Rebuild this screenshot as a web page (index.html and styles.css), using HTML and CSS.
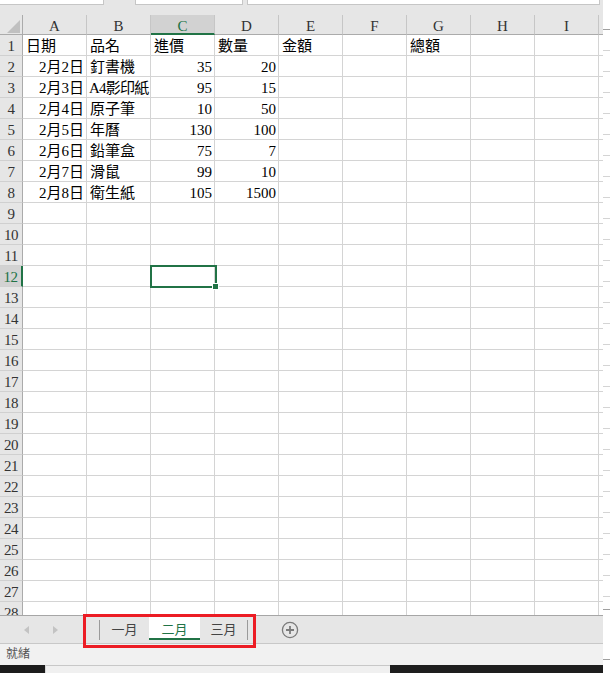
FILE: index.html
```html
<!DOCTYPE html>
<html>
<head>
  <meta charset="utf-8">
  <title>二月 - 進貨表</title>
  <link rel="stylesheet" href="styles.css">
</head>
<body>
  <div class="app">
    <div class="window">
      <div class="formula-strip">
        <div class="box name-box"></div>
        <div class="box fx-box"></div>
        <div class="box formula-box"></div>
      </div>

      <div class="sheet" id="sheet"></div>

      <div class="tabbar">
        <div class="nav">
          <span class="arrow left"></span>
          <span class="arrow right"></span>
        </div>
        <div class="tabs">
          <span class="sep"></span>
          <div class="tab">一月</div>
          <div class="tab active">二月</div>
          <div class="tab">三月</div>
          <span class="sep"></span>
        </div>
        <svg class="add-sheet" width="18" height="18" viewBox="0 0 18 18">
          <circle cx="9" cy="9" r="7.6" fill="none" stroke="#7b7b7b" stroke-width="1.3"/>
          <path d="M9 5v8M5 9h8" stroke="#7b7b7b" stroke-width="1.8"/>
        </svg>
      </div>

      <div class="statusbar">就緒</div>

      <div class="taskbar">
        <div class="task dark-left"></div>
        <div class="task light"></div>
        <div class="task dark"></div>
      </div>
    </div>
    <div class="edge"></div>

    <div class="highlight"></div>
  </div>

  <script>
    var data = [
      ['日期', '品名', '進價', '數量', '金額', '', '總額'],
      ['2月2日', '釘書機', 35, 20],
      ['2月3日', 'A4影印紙', 95, 15],
      ['2月4日', '原子筆', 10, 50],
      ['2月5日', '年曆', 130, 100],
      ['2月6日', '鉛筆盒', 75, 7],
      ['2月7日', '滑鼠', 99, 10],
      ['2月8日', '衛生紙', 105, 1500]
    ];
    var cols = ['A', 'B', 'C', 'D', 'E', 'F', 'G', 'H', 'I'];
    var sheet = document.getElementById('sheet');

    function add(cls, text) {
      var d = document.createElement('div');
      d.className = cls;
      d.textContent = text;
      sheet.appendChild(d);
      return d;
    }

    // 欄標題
    add('corner', '');
    cols.forEach(function(c) {
      add('col-head' + (c === 'C' ? ' sel' : ''), c);
    });
    add('col-head rest', '');

    // 28 列 (最後一列只露出一半)
    for (var r = 1; r <= 28; r++) {
      add('row-head' + (r === 12 ? ' sel' : ''), r);
      var row = data[r - 1] || [];
      for (var i = 0; i < cols.length; i++) {
        var v = row[i] === undefined ? '' : row[i];
        var cls = 'cell';
        if (typeof v === 'number' || (i === 0 && r > 1 && v !== '')) cls += ' num';
        if (r === 12 && i === 2) cls += ' active';
        var d = add(cls, v);
        // 太長的字串稍微擠一下, 不要被右邊的格子切掉
        if (d.scrollWidth > d.clientWidth) d.classList.add('tight');
      }
      add('cell rest', '');
    }
  </script>
</body>
</html>
```

FILE: styles.css
```css
body {
  margin: 0;
  font-family: "Liberation Serif", "Noto Sans CJK TC", serif;
  background-color: #fff;
  overflow: hidden;
}

.app {
  position: relative;
  display: flex;
  width: 610px;
  height: 673px;
}

.window {
  width: 603px;
  display: flex;
  flex-direction: column;
}

/* 上方名稱方塊 / 公式列 */
.formula-strip {
  height: 15px;
  display: flex;
  background-color: #e6e6e6;
}

.box {
  height: 4px;
  background-color: #fff;
  border: 1px solid #c6c6c6;
  border-top: none;
}

.name-box {
  width: 103px;
  border-left: none;
}

.fx-box {
  width: 106px;
  margin-left: 31px;
}

.formula-box {
  flex: 1;
  margin-left: 4px;
  margin-right: 3px;
}

/* 工作表 */
.sheet {
  height: 600px;
  overflow: hidden;
  display: grid;
  grid-template-columns: 23px repeat(9, 64px) 4px;
  grid-template-rows: 20px;
  grid-auto-rows: 21px;
}

.sheet > div {
  box-sizing: border-box;
  white-space: nowrap;
  overflow: hidden;
}

.corner {
  background-color: #e6e6e6;
  border-right: 1px solid #ababab;
  border-bottom: 1px solid #ababab;
  display: flex;
  justify-content: flex-end;
  align-items: flex-end;
  padding: 0 2px 1px 0;
}

.corner::after {
  content: "";
  width: 0;
  height: 0;
  border-left: 13px solid transparent;
  border-bottom: 13px solid #c0c0c0;
}

.col-head {
  background-color: #e6e6e6;
  border-right: 1px solid #c6c6c6;
  border-bottom: 1px solid #ababab;
  color: #333;
  font-size: 15px;
  line-height: 23px;
  text-align: center;
}

.col-head.sel {
  background-color: #d2d2d2;
  color: #217346;
  border-bottom: 2px solid #217346;
}

.col-head.rest {
  border-right: none;
}

.row-head {
  background-color: #e6e6e6;
  border-right: 1px solid #ababab;
  border-bottom: 1px solid #d0d0d0;
  color: #333;
  font-size: 15px;
  line-height: 23px;
  text-align: center;
  letter-spacing: -0.5px;
}

.row-head.sel {
  background-color: #d2d2d2;
  color: #217346;
  border-right: 2px solid #217346;
}

.cell {
  border-right: 1px solid #d4d4d4;
  border-bottom: 1px solid #d4d4d4;
  padding: 0 2px 0 3px;
  font-size: 15px;
  line-height: 23px;
  color: #000;
}

.cell.num {
  text-align: right;
}

.cell.tight {
  padding-left: 2px;
  letter-spacing: -0.8px;
}

.cell.rest {
  border-right: none;
}

/* 作用中儲存格 */
.cell.active {
  position: relative;
  overflow: visible;
  z-index: 1;
}

.cell.active::after {
  content: "";
  position: absolute;
  left: -1px;
  top: -1px;
  width: 67px;
  height: 23px;
  box-sizing: border-box;
  border: 2px solid #217346;
}

.cell.active::before {
  content: "";
  position: absolute;
  left: 61px;
  top: 17px;
  width: 5px;
  height: 5px;
  background-color: #217346;
  border: 1px solid #fff;
  z-index: 2;
}

/* 工作表索引標籤 */
.tabbar {
  height: 29px;
  box-sizing: border-box;
  display: flex;
  align-items: center;
  background-color: #e6e6e6;
  border-top: 1px solid #a6a6a6;
  border-bottom: 1px solid #c8c8c8;
}

.nav {
  width: 99px;
  display: flex;
  align-items: center;
}

.arrow {
  width: 0;
  height: 0;
  border-top: 4px solid transparent;
  border-bottom: 4px solid transparent;
}

.arrow.left {
  margin-left: 24px;
  border-right: 5px solid #c3c3c3;
}

.arrow.right {
  margin-left: 24px;
  border-left: 5px solid #c3c3c3;
}

.tabs {
  display: flex;
  align-self: stretch;
  align-items: center;
}

.sep {
  width: 1px;
  height: 20px;
  background-color: #9a9a9a;
}

.tab {
  width: 49px;
  height: 23px;
  margin-top: 1px;
  align-self: flex-start;
  box-sizing: border-box;
  text-align: center;
  font-family: "Noto Sans CJK TC", sans-serif;
  font-size: 13px;
  line-height: 23px;
  color: #444;
}

.tab.active {
  width: 51px;
  background-color: #fff;
  color: #217346;
  border-bottom: 2px solid #217346;
}

.tab:last-of-type {
  width: 47px;
}

.add-sheet {
  margin-left: 33px;
}

/* 狀態列 */
.statusbar {
  height: 21px;
  padding-left: 6px;
  background-color: #f1f1f1;
  font-family: "Noto Sans CJK TC", sans-serif;
  font-size: 12px;
  line-height: 18px;
  color: #555;
}

.taskbar {
  flex: 1;
  display: flex;
}

.task.dark-left {
  width: 45px;
  background-color: #1c1c1c;
}

.task.light {
  width: 344px;
  background-color: #f0f0f0;
  border-top: 1px solid #c8c8c8;
  border-left: 1px solid #d6d6d6;
}

.task.dark {
  flex: 1;
  background-color: #1e1e1e;
}

/* 右側邊緣 */
.edge {
  flex: 1;
  background-color: #fff;
  background-image:
    linear-gradient(#a0a0a0, #a0a0a0),
    linear-gradient(#a0a0a0, #a0a0a0),
    linear-gradient(#a0a0a0, #a0a0a0),
    repeating-linear-gradient(to bottom, transparent 0, transparent 20px, #d4d4d4 20px, #d4d4d4 21px);
  background-size: 100% 1px, 100% 1px, 100% 1px, 100% 568px;
  background-position: 0 29px, 0 609px, 0 659px, 0 30px;
  background-repeat: no-repeat;
}

/* 紅框標示 */
.highlight {
  position: absolute;
  left: 83px;
  top: 614px;
  width: 173px;
  height: 34px;
  box-sizing: border-box;
  border: 3px solid #ec1c24;
}
```
